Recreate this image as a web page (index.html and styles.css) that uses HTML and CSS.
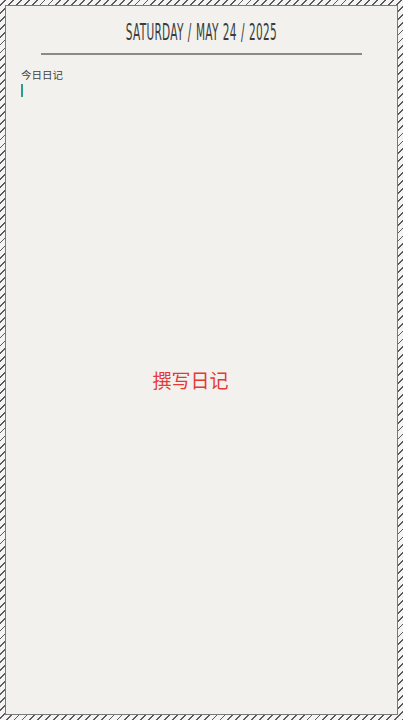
FILE: index.html
```html
<!DOCTYPE html>
<html lang="zh">
<head>
<meta charset="utf-8">
<link rel="stylesheet" href="styles.css">
</head>
<body>
<div class="frame">
  <div class="page">
    <header class="head">
      <h1 class="date">SATURDAY / MAY 24 / 2025</h1>
      <div class="rule"></div>
    </header>
    <div class="entry">
      <div class="label">今日日记</div>
      <div class="caret"></div>
    </div>
    <div class="empty">
      <span class="prompt">撰写日记</span>
    </div>
  </div>
</div>
</body>
</html>
```
FILE: styles.css
```css
html, body {
  margin: 0;
  padding: 0;
}
body {
  width: 403px;
  height: 720px;
  overflow: hidden;
  font-family: "Noto Sans CJK SC", "Noto Sans", sans-serif;
}
.frame {
  box-sizing: border-box;
  width: 403px;
  height: 720px;
  padding: 5px 5px 5px 5px;
  background: repeating-linear-gradient(-45deg, #5a5a5a 0 1.3px, #f4f4f4 1.3px 5.6px);
}
.page {
  box-sizing: border-box;
  height: 100%;
  border: 1px solid #7a7a7a;
  background: #f2f1ed;
  display: flex;
  flex-direction: column;
}
.head {
  padding: 13px 35px 0 35px;
}
.date {
  margin: 0;
  text-align: center;
  font-family: "Liberation Sans Narrow", "DejaVu Sans Condensed", sans-serif;
  font-weight: normal;
  font-size: 23px;
  line-height: 26px;
  letter-spacing: 0.6px;
  word-spacing: 1px;
  color: #3c3c3c;
  transform: scaleX(0.51);
}
.rule {
  margin-top: 8px;
  height: 2px;
  background: #8a8a88;
}
.entry {
  padding: 13px 15px 0 15px;
}
.label {
  font-size: 10.5px;
  line-height: 14px;
  color: #3f3f3f;
}
.caret {
  margin-top: 2px;
  width: 2px;
  height: 13px;
  background: #2a9d8f;
}
.empty {
  flex: 1;
  display: flex;
  align-items: center;
  justify-content: center;
  padding: 0 22px 0 0;
  margin-top: -52px;
}
.prompt {
  font-size: 19px;
  color: #e53935;
}
```
